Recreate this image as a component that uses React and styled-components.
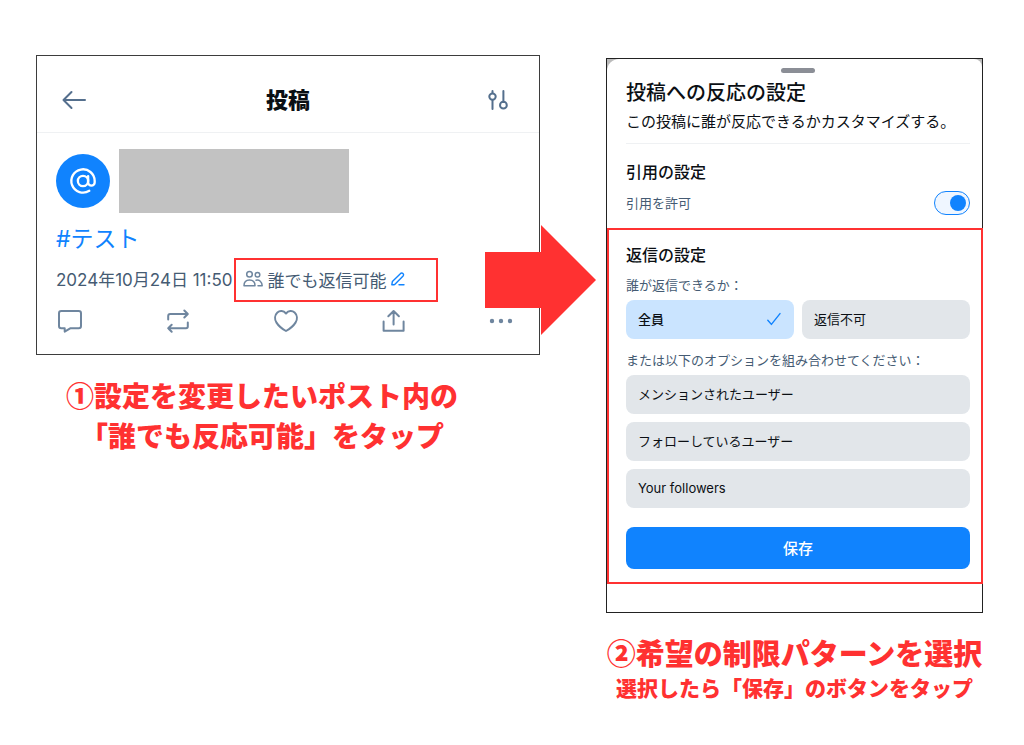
import React, { useState } from 'react'
import styled, { createGlobalStyle } from 'styled-components'

const colors = {
    red: '#ff3131',
    blue: '#1083fe',
    paleBlue: '#cae4ff',
    option: '#e2e6ea',
    text: '#0b0f14',
    slate: '#455b73',
    icon: '#6f869f',
    line: '#eff1f3',
    redacted: '#c2c2c2',
}

const combinable = ['メンションされたユーザー', 'フォローしているユーザー', 'Your followers']

const App = () => {
    const [quotes, setQuotes] = useState(true)
    const [everyone, setEveryone] = useState(true)
    const [picked, setPicked] = useState([])

    const togglePicked = name => {
        setPicked(picked.includes(name) ? picked.filter(p => p !== name) : [...picked, name])
    }

    return (
        <Page>
            <GlobalStyle />
            <PostStep>
                <PostPanel>
                    <PostHeader>
                        <IconButton aria-label='戻る'><BackIcon /></IconButton>
                        <PostTitle>投稿</PostTitle>
                        <IconButton aria-label='表示設定'><SlidersIcon /></IconButton>
                    </PostHeader>
                    <PostBody>
                        <Author>
                            <Avatar><AtIcon /></Avatar>
                            <Redacted />
                        </Author>
                        <Hashtag href='#test'>#テスト</Hashtag>
                        <Meta>
                            <time dateTime='2024-10-24T11:50'>2024年10月24日 11:50</time>
                            <ReplyScope>
                                <PeopleIcon />
                                誰でも返信可能
                                <PenIcon />
                            </ReplyScope>
                        </Meta>
                        <Actions>
                            <IconButton aria-label='返信'><CommentIcon /></IconButton>
                            <IconButton aria-label='リポスト'><RepostIcon /></IconButton>
                            <IconButton aria-label='いいね'><HeartIcon /></IconButton>
                            <IconButton aria-label='共有'><ShareIcon /></IconButton>
                            <IconButton aria-label='その他'><DotsIcon /></IconButton>
                        </Actions>
                    </PostBody>
                    <Arrow viewBox='0 0 111 110' aria-hidden='true'>
                        <path d='M0 27H56V0L111 55L56 110V83H0Z' fill={ colors.red } />
                    </Arrow>
                </PostPanel>
                <PostCaption>
                    ①設定を変更したいポスト内の<br />
                    「誰でも反応可能」をタップ
                </PostCaption>
            </PostStep>

            <SheetStep>
                <SheetPanel>
                    <Sheet>
                        <SheetTop>
                            <Handle />
                            <SheetTitle>投稿への反応の設定</SheetTitle>
                            <Lead>この投稿に誰が反応できるかカスタマイズする。</Lead>
                        </SheetTop>
                        <QuoteSection>
                            <SectionTitle>引用の設定</SectionTitle>
                            <SwitchRow>
                                <Label as='label' htmlFor='quotes'>引用を許可</Label>
                                <Switch
                                    id='quotes'
                                    type='checkbox'
                                    checked={ quotes }
                                    onChange={ () => setQuotes(!quotes) }
                                />
                            </SwitchRow>
                        </QuoteSection>
                        <ReplySection>
                            <SectionTitle>返信の設定</SectionTitle>
                            <Label>誰が返信できるか：</Label>
                            <Pair>
                                <Option $active={ everyone } aria-pressed={ everyone } onClick={ () => setEveryone(true) }>
                                    全員
                                    { everyone && <CheckIcon /> }
                                </Option>
                                <Option $active={ !everyone } aria-pressed={ !everyone } onClick={ () => setEveryone(false) }>
                                    返信不可
                                    { !everyone && <CheckIcon /> }
                                </Option>
                            </Pair>
                            <Label>または以下のオプションを組み合わせてください：</Label>
                            <Stack>
                                { combinable.map(name => (
                                    <Option
                                        key={ name }
                                        $active={ picked.includes(name) }
                                        aria-pressed={ picked.includes(name) }
                                        onClick={ () => togglePicked(name) }
                                    >
                                        { name }
                                        { picked.includes(name) && <CheckIcon /> }
                                    </Option>
                                )) }
                            </Stack>
                            <SaveButton>保存</SaveButton>
                        </ReplySection>
                    </Sheet>
                </SheetPanel>
                <SheetCaption>②希望の制限パターンを選択</SheetCaption>
                <SmallCaption>選択したら「保存」のボタンをタップ</SmallCaption>
            </SheetStep>
        </Page>
    )
}

export default App

const BackIcon = () => (
    <Icon viewBox='0 0 24 24' $color='#546f8d'>
        <path d='M23 12H1.5M9.5 4L1.5 12L9.5 20' />
    </Icon>
)

const SlidersIcon = () => (
    <Icon viewBox='0 0 24 24' $color='#546f8d'>
        <path d='M2.5 3V5M2.5 12.2V21M13.4 3V14' />
        <circle cx='2.5' cy='8.6' r='3.2' />
        <circle cx='13.4' cy='17.2' r='3.4' />
    </Icon>
)

const AtIcon = () => (
    <Icon viewBox='0 0 24 24' $size={ 28 } $color='#fff'>
        <circle cx='12' cy='12' r='4.4' />
        <path d='M16.4 7.8V13.2a2.8 2.8 0 0 0 5.6 0V12a10 10 0 1 0-4.6 8.4' />
    </Icon>
)

const PeopleIcon = () => (
    <Icon viewBox='0 0 20 20' $size={ 20 } $color={ colors.icon } $stroke='1.5'>
        <circle cx='6.5' cy='5.3' r='2.8' />
        <circle cx='14.5' cy='5.7' r='2.3' />
        <path d='M1 16.8C1 13.2 3.2 11 6.5 11S12 13.2 12 16.8ZM13 11.2C16.4 10.5 19 12.8 19.2 16.8H15' />
    </Icon>
)

const PenIcon = () => (
    <Icon viewBox='0 0 16 16' $size={ 16 } $color={ colors.blue } $stroke='1.4'>
        <path d='M1.8 13.8L2.4 10.4L10.6 2.4Q11.8 1.4 13 2.5Q14.2 3.8 13.1 5L5.2 13Q4.6 13.8 3.8 13.8ZM9 13.8H14' />
    </Icon>
)

const CommentIcon = () => (
    <Icon viewBox='0 0 24 24' $color={ colors.icon }>
        <path d='M3.3 2H20.7Q23 2 23 4.3V17Q23 19.3 20.7 19.3H12.2L6.7 22.6V19.3H3.3Q1 19.3 1 17V4.3Q1 2 3.3 2Z' />
    </Icon>
)

const RepostIcon = () => (
    <Icon viewBox='0 0 24 24' $color={ colors.icon }>
        <path d='M2.2 10.5V7Q2.2 5 4.2 5H21.5M18.3 1.5L21.8 5L18.3 8.5M21.8 13.5V17.5Q21.8 19.3 20 19.3H2.2M5.7 15.8L2.2 19.3L5.7 22.8' />
    </Icon>
)

const HeartIcon = () => (
    <Icon viewBox='0 0 24 24' $color={ colors.icon }>
        <path d='M12 4.5C9.4 1.5 5.8 1.4 3.4 3.5C.6 6 .4 10.2 2.5 13.6C4.6 17 8.2 19.8 12 22C15.8 19.8 19.4 17 21.5 13.6C23.6 10.2 23.4 6 20.6 3.5C18.2 1.4 14.6 1.5 12 4.5Z' />
    </Icon>
)

const ShareIcon = () => (
    <Icon viewBox='0 0 24 24' $color={ colors.icon }>
        <path d='M12.6 15.5V2.5M7.3 7.3L12.6 2L17.9 7.3M2.6 12.5V21.8H22.6V12.5' />
    </Icon>
)

const DotsIcon = () => (
    <Icon viewBox='0 0 24 24' $color={ colors.icon }>
        <path d='M3 12h0M12 12h0M21 12h0' strokeWidth='4.4' />
    </Icon>
)

const CheckIcon = () => (
    <Icon viewBox='0 0 16 16' $size={ 16 } $color={ colors.blue } $stroke='1.4'>
        <path d='M1.8 9.2L5.4 13.4L14 2.6' />
    </Icon>
)

const GlobalStyle = createGlobalStyle`
    * {
        box-sizing: border-box;
    }

    body {
        margin: 0;
        background: #fff;
        color: ${colors.text};
        font-family: Inter, 'Noto Sans CJK JP', sans-serif;
    }

    h1, h2, p {
        margin: 0;
    }

    button {
        padding: 0;
        border: 0;
        font-family: inherit;
        cursor: pointer;
    }
`

const Icon = styled.svg`
    display: block;
    flex: none;
    width: ${({ $size = 24 }) => $size}px;
    height: ${({ $size = 24 }) => $size}px;
    overflow: visible;
    fill: none;
    stroke: ${({ $color }) => $color};
    stroke-width: ${({ $stroke = 2 }) => $stroke};
    stroke-linecap: round;
    stroke-linejoin: round;
`

const Page = styled.main`
    display: grid;
    grid-template-columns: 504fr 377fr;
    column-gap: 66px;
    align-items: start;
    padding: 55px 41px 40px 36px;
`

const PostStep = styled.section`
    min-width: 0;
`

const PostPanel = styled.div`
    position: relative;
    border: 1px solid #3d3d3d;
`

const PostHeader = styled.header`
    display: flex;
    align-items: center;
    justify-content: space-between;
    height: 77px;
    padding: 12px 25px 0;
    border-bottom: 1px solid ${colors.line};
`

const PostTitle = styled.h1`
    font-size: 22px;
    line-height: 32px;
    font-weight: 900;
`

const IconButton = styled.button`
    background: none;
`

const PostBody = styled.div`
    padding: 16px 19px 21px;
`

const Author = styled.div`
    display: flex;
    align-items: center;
    gap: 9px;
`

const Avatar = styled.div`
    display: flex;
    align-items: center;
    justify-content: center;
    width: 54px;
    height: 54px;
    border-radius: 50%;
    background: ${colors.blue};
`

const Redacted = styled.div`
    width: 230px;
    height: 64px;
    background: ${colors.redacted};
`

const Hashtag = styled.a`
    display: block;
    margin-top: 10px;
    font-size: 23px;
    line-height: 32px;
    color: ${colors.blue};
    text-decoration: none;
`

const Meta = styled.div`
    display: flex;
    align-items: center;
    gap: 2px;
    margin-top: 3px;
    font-size: 17px;
    line-height: 24px;
    color: ${colors.slate};
    white-space: nowrap;
`

const ReplyScope = styled.button`
    display: flex;
    align-items: center;
    gap: 4px;
    height: 44px;
    padding: 0 30px 2px 7px;
    border: 2px solid ${colors.red};
    background: none;
    color: inherit;
    font-size: 17px;
    white-space: nowrap;
`

const Actions = styled.div`
    display: flex;
    justify-content: space-between;
    margin-top: 7px;
    padding: 0 7px 0 2px;
`

const Arrow = styled.svg`
    position: absolute;
    top: 169px;
    right: -57px;
    width: 111px;
    height: 110px;
`

const Caption = styled.p`
    color: ${colors.red};
    font-family: 'Noto Sans CJK JP', sans-serif;
    font-weight: 900;
    text-align: center;
    white-space: nowrap;
`

const PostCaption = styled(Caption)`
    margin-top: 20px;
    padding-right: 52px;
    font-size: 28px;
    line-height: 40px;
`

const SheetStep = styled.section`
    min-width: 0;
    padding-top: 3px;
`

const SheetPanel = styled.div`
    border: 1px solid #222;
    background: #bbb;
`

const Sheet = styled.div`
    padding: 9px 0 28px;
    border-radius: 12px 8px 0 0;
    background: #fff;
`

const Handle = styled.div`
    width: 34px;
    height: 5px;
    margin: 0 auto 6px;
    border-radius: 3px;
    background: #8b8e96;
`

const SheetTop = styled.header`
    margin: 0 12px 0 19px;
    padding-bottom: 9px;
    border-bottom: 1px solid ${colors.line};
`

const SheetTitle = styled.h1`
    font-size: 20px;
    line-height: 28px;
    font-weight: 500;
`

const Lead = styled.p`
    margin-top: 3px;
    font-size: 15px;
    line-height: 24px;
    white-space: nowrap;
`

const QuoteSection = styled.section`
    padding: 16px 12px 13px 19px;
`

const SectionTitle = styled.h2`
    font-size: 16px;
    line-height: 24px;
    font-weight: 500;
`

const SwitchRow = styled.div`
    display: flex;
    align-items: center;
    justify-content: space-between;
    margin-top: 7px;
`

const Label = styled.p`
    font-size: 13px;
    line-height: 18px;
    color: ${colors.slate};
    white-space: nowrap;
`

const Switch = styled.input`
    appearance: none;
    display: flex;
    align-items: center;
    justify-content: ${({ checked }) => checked ? 'flex-end' : 'flex-start'};
    width: 36px;
    height: 24px;
    margin: 0;
    padding: 0 3px;
    border: 1px solid ${colors.blue};
    border-radius: 12px;
    background: #eff6ff;
    cursor: pointer;

    &::before {
        content: '';
        width: 16px;
        height: 16px;
        border-radius: 50%;
        background: ${colors.blue};
    }
`

const ReplySection = styled.section`
    margin-right: -1px;
    padding: 13px 11px 13px 17px;
    border: 2px solid ${colors.red};

    ${Label} {
        margin-top: 9px;
    }
`

const Pair = styled.div`
    display: grid;
    grid-template-columns: 1fr 1fr;
    gap: 8px;
    margin: 6px 0 12px;
`

const Stack = styled.div`
    display: grid;
    gap: 8px;
    margin-top: 6px;
`

const Option = styled.button`
    display: flex;
    align-items: center;
    justify-content: space-between;
    height: 39px;
    padding: 0 12px 2px;
    border-radius: 8px;
    background: ${({ $active }) => $active ? colors.paleBlue : colors.option};
    color: ${colors.text};
    font-size: 13px;
    font-weight: ${({ $active }) => $active ? 500 : 400};
`

const SaveButton = styled.button`
    width: 100%;
    height: 42px;
    margin-top: 19px;
    padding-bottom: 2px;
    border-radius: 8px;
    background: ${colors.blue};
    color: #fff;
    font-size: 15px;
    font-weight: 500;
`

const SheetCaption = styled(Caption)`
    margin-top: 19px;
    font-size: 29px;
    line-height: 40px;
`

const SmallCaption = styled(Caption)`
    font-size: 21px;
    line-height: 30px;
`
